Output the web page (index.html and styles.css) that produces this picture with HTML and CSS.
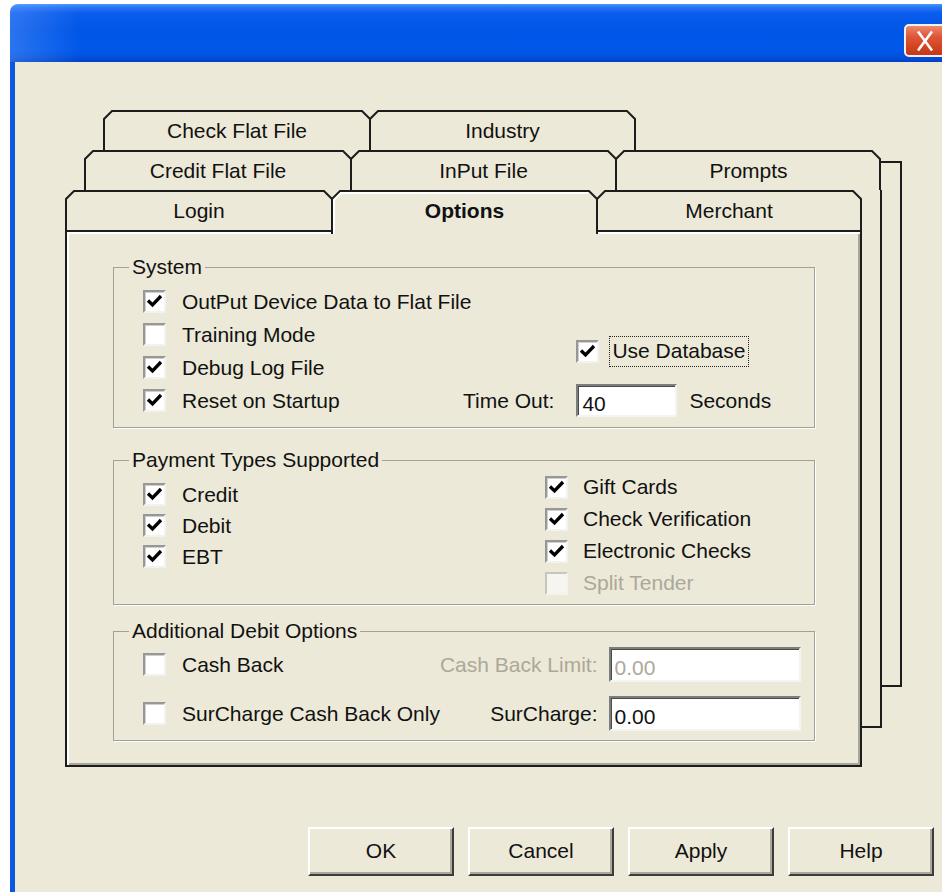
FILE: index.html
```html
<!DOCTYPE html>
<html lang="en">
<head>
<meta charset="utf-8">
<title>Options</title>
<link rel="stylesheet" href="styles.css">
</head>
<body>
<div class="window">
  <div class="titlebar">
    <button class="close" type="button" aria-label="Close">
      <svg width="18" height="22" viewBox="0 0 18 22"><path d="M2 1.5L16 20.5M16 1.5L2 20.5"/></svg>
    </button>
  </div>

  <div class="client">
    <div class="deck">

      <!-- back row -->
      <div class="sheet sheet-3">
        <div class="tab-row">
          <div class="tab t-a">
            <svg class="tab-shape" width="268" height="40" viewBox="0 0 268 40"><path d="M1 40V9L9 1H259L267 9V40"/></svg>
            <span class="tab-label">Check Flat File</span>
          </div>
          <div class="tab t-b">
            <svg class="tab-shape" width="267" height="40" viewBox="0 0 267 40"><path d="M1 40V9L9 1H258L266 9V40"/></svg>
            <span class="tab-label">Industry</span>
          </div>
        </div>
        <div class="page page-back page-3"></div>
      </div>

      <!-- middle row -->
      <div class="sheet sheet-2">
        <div class="tab-row">
          <div class="tab t-a">
            <svg class="tab-shape" width="268" height="40" viewBox="0 0 268 40"><path d="M1 40V9L9 1H259L267 9V40"/></svg>
            <span class="tab-label">Credit Flat File</span>
          </div>
          <div class="tab t-b">
            <svg class="tab-shape" width="267" height="40" viewBox="0 0 267 40"><path d="M1 40V9L9 1H258L266 9V40"/></svg>
            <span class="tab-label">InPut File</span>
          </div>
          <div class="tab t-c">
            <svg class="tab-shape" width="266" height="40" viewBox="0 0 266 40"><path d="M1 40V9L9 1H257L265 9V40"/></svg>
            <span class="tab-label">Prompts</span>
          </div>
        </div>
        <div class="page page-back page-2"></div>
      </div>

      <!-- front row with the active page -->
      <div class="sheet sheet-1">
        <div class="tab-row">
          <div class="tab t-a">
            <svg class="tab-shape" width="268" height="40" viewBox="0 0 268 40"><path d="M1 40V9L9 1H259L267 9V40"/></svg>
            <span class="tab-label">Login</span>
          </div>
          <div class="tab t-b tab-active">
            <svg class="tab-shape" width="267" height="44" viewBox="0 0 267 44"><path d="M1 44V9L9 1H258L266 9V44"/><path class="hl" d="M3 44V10L10 3H257"/></svg>
            <span class="tab-label">Options</span>
          </div>
          <div class="tab t-c">
            <svg class="tab-shape" width="266" height="40" viewBox="0 0 266 40"><path d="M1 40V9L9 1H257L265 9V40"/></svg>
            <span class="tab-label">Merchant</span>
          </div>
        </div>

        <div class="page page-front">

          <fieldset class="group group-system">
            <legend>System</legend>
            <div class="sys-grid">
              <div class="sys-checks">
                <label class="check"><span class="box"><svg viewBox="0 0 19 19"><path d="M3 8.5L7.5 13L16 4"/></svg></span><span>OutPut Device Data to Flat File</span></label>
                <label class="check"><span class="box"></span><span>Training Mode</span></label>
                <label class="check"><span class="box"><svg viewBox="0 0 19 19"><path d="M3 8.5L7.5 13L16 4"/></svg></span><span>Debug Log File</span></label>
                <label class="check"><span class="box"><svg viewBox="0 0 19 19"><path d="M3 8.5L7.5 13L16 4"/></svg></span><span>Reset on Startup</span></label>
              </div>
              <label class="check check-focus use-db"><span class="box"><svg viewBox="0 0 19 19"><path d="M3 8.5L7.5 13L16 4"/></svg></span><span class="focus">Use Database</span></label>
              <span class="field-label timeout-label">Time Out:</span>
              <span class="edit timeout-edit">40</span>
              <span class="seconds">Seconds</span>
            </div>
          </fieldset>

          <fieldset class="group group-payment">
            <legend>Payment Types Supported</legend>
            <div class="pay-grid">
              <div class="pay-left">
                <label class="check"><span class="box"><svg viewBox="0 0 19 19"><path d="M3 8.5L7.5 13L16 4"/></svg></span><span>Credit</span></label>
                <label class="check"><span class="box"><svg viewBox="0 0 19 19"><path d="M3 8.5L7.5 13L16 4"/></svg></span><span>Debit</span></label>
                <label class="check"><span class="box"><svg viewBox="0 0 19 19"><path d="M3 8.5L7.5 13L16 4"/></svg></span><span>EBT</span></label>
              </div>
              <div class="pay-right">
                <label class="check"><span class="box"><svg viewBox="0 0 19 19"><path d="M3 8.5L7.5 13L16 4"/></svg></span><span>Gift Cards</span></label>
                <label class="check"><span class="box"><svg viewBox="0 0 19 19"><path d="M3 8.5L7.5 13L16 4"/></svg></span><span>Check Verification</span></label>
                <label class="check"><span class="box"><svg viewBox="0 0 19 19"><path d="M3 8.5L7.5 13L16 4"/></svg></span><span>Electronic Checks</span></label>
                <label class="check is-disabled"><span class="box"></span><span>Split Tender</span></label>
              </div>
            </div>
          </fieldset>

          <fieldset class="group group-debit">
            <legend>Additional Debit Options</legend>
            <div class="debit-grid">
              <label class="check"><span class="box"></span><span>Cash Back</span></label>
              <span class="field-label is-disabled">Cash Back Limit:</span>
              <span class="edit is-disabled">0.00</span>
              <label class="check"><span class="box"></span><span>SurCharge Cash Back Only</span></label>
              <span class="field-label">SurCharge:</span>
              <span class="edit">0.00</span>
            </div>
          </fieldset>

        </div>
      </div>
    </div>

    <div class="actions">
      <button class="btn" type="button">OK</button>
      <button class="btn" type="button">Cancel</button>
      <button class="btn" type="button">Apply</button>
      <button class="btn" type="button">Help</button>
    </div>
  </div>
</div>
</body>
</html>
```

FILE: styles.css
```css
html, body {
  margin: 0;
  height: 100%;
  overflow: hidden;
  background: #ffffff;
}

body {
  font-family: "Liberation Sans", Arial, sans-serif;
  font-size: 21px;
  color: #111;
}

/* ---------- window frame ---------- */
.window {
  margin: 4px 0 0 10px;
  width: 944px;
  height: 888px;
  display: flex;
  flex-direction: column;
}

.titlebar {
  height: 58px;
  flex: none;
  border-radius: 8px 8px 0 0;
  background:
    linear-gradient(90deg, rgba(120, 170, 255, 0.35) 0, rgba(120, 170, 255, 0) 70px),
    linear-gradient(180deg, #4a97ff 0, #2a78f6 3px, #0a5cec 9px, #0056e6 26px, #0058ea 46px, #0050dc 53px, #0040c6 58px);
  display: flex;
  justify-content: flex-end;
  align-items: flex-start;
  padding: 20px 8px 0 0;
  box-sizing: border-box;
}

.close {
  width: 42px;
  height: 33px;
  padding: 0;
  border: 2px solid #f4f0ee;
  border-radius: 5px;
  background: linear-gradient(180deg, #ec8a6d 0, #e0583a 35%, #d2451f 70%, #c2391a 100%);
  display: flex;
  align-items: center;
  justify-content: center;
}

.close svg {
  display: block;
  fill: none;
  stroke: #ffffff;
  stroke-width: 2.6;
}

.client {
  flex: 1;
  background: #ece9d8;
  border-left: 5px solid #0b57df;
}

/* ---------- stacked tab sheets ---------- */
.deck {
  display: grid;
  margin: 48px 0 0 50px;
  width: 840px;
}

.sheet {
  grid-area: 1 / 1;
  width: 797px;
  align-self: start;
  position: relative;
}

.sheet-3 { margin-left: 38px; z-index: 1; width: 799px; }
.sheet-2 { margin-left: 19px; margin-top: 40px; z-index: 2; width: 798px; }
.sheet-1 { margin-top: 80px; z-index: 3; }

.tab-row {
  display: flex;
  height: 40px;
}

.tab {
  position: relative;
  height: 40px;
  display: flex;
  align-items: center;
  justify-content: center;
  flex: none;
}

.tab + .tab { margin-left: -2px; }

.t-a { width: 268px; }
.t-b { width: 267px; }
.t-c { width: 266px; }

.sheet-2 .t-c { width: 267px; }

.tab-shape {
  position: absolute;
  top: 0;
  left: 0;
  fill: #ece9d8;
  stroke: #1c1c1c;
  stroke-width: 2;
}

.tab-shape .hl {
  fill: none;
  stroke: #ffffff;
}

.tab-label {
  position: relative;
  padding-top: 1px;
}

.tab-active {
  height: 44px;
  align-items: flex-start;
  z-index: 1;
}

.tab-active .tab-label {
  font-weight: bold;
  padding-top: 9px;
}

.page {
  box-sizing: border-box;
  background: #ece9d8;
}

.page-2 {
  height: 538px;
  border: 2px solid #1c1c1c;
  border-top: 0;
}

.page-3 {
  margin-top: 11px;
  height: 526px;
  border: 2px solid #1c1c1c;
}

.page-front {
  height: 537px;
  border: 2px solid #1c1c1c;
  box-shadow: inset 2px 2px 0 #ffffff, inset -2px -2px 0 #a9a69a;
  padding: 23px 45px 0 46px;
}

/* ---------- group boxes ---------- */
.group {
  margin: 0;
  padding: 0;
  border: 1px solid #a3a195;
  box-shadow: 1px 1px 0 #ffffff;
  min-width: 0;
}

.group legend {
  padding: 0 3px;
  margin-left: 15px;
  line-height: 24px;
}

.group-payment { margin-top: 20px; }
.group-debit { margin-top: 14px; }

/* ---------- checkboxes ---------- */
.check {
  display: flex;
  align-items: center;
  gap: 16px;
  height: 33px;
  white-space: nowrap;
}

.box {
  width: 23px;
  height: 23px;
  box-sizing: border-box;
  flex: none;
  border: 2px solid;
  border-color: #979797 #f2f2f0 #f2f2f0 #979797;
  box-shadow: inset 1px 1px 0 #cfcfcf;
  background: #ffffff;
}

.box svg {
  display: block;
  width: 19px;
  height: 19px;
  fill: none;
  stroke: #000;
  stroke-width: 3.3;
}

.is-disabled { color: #aca899; }

.check.is-disabled .box {
  border-color: #c8c6bc #f4f3ee #f4f3ee #c8c6bc;
  box-shadow: none;
  background: #f6f5f0;
}

/* ---------- System ---------- */
.sys-grid {
  display: grid;
  grid-template-columns: 320px auto 101px auto;
  grid-template-rows: repeat(4, 33px);
  justify-content: start;
  padding: 6px 0 10px 29px;
  align-items: center;
}

.sys-checks {
  grid-column: 1;
  grid-row: 1 / 5;
  align-self: start;
}

.use-db {
  grid-column: 3 / 5;
  grid-row: 2 / 4;
  gap: 10px;
}

.focus {
  border: 1px dotted #222;
  padding: 2px 3px 3px 2px;
  line-height: 24px;
}

.field-label {
  text-align: right;
  white-space: nowrap;
}

.timeout-label {
  grid-column: 2;
  grid-row: 4;
  padding-right: 22px;
}

.timeout-edit {
  grid-column: 3;
  grid-row: 4;
}

.seconds {
  grid-column: 4;
  grid-row: 4;
  padding-left: 12px;
}

/* ---------- sunken edit boxes ---------- */
.edit {
  display: block;
  height: 33px;
  box-sizing: border-box;
  border: 2px solid;
  border-color: #7d7d7d #f4f4f0 #f4f4f0 #7d7d7d;
  box-shadow: inset 1px 1px 0 #4a4a4a;
  background: #ffffff;
  padding: 6px 0 0 4px;
  line-height: 24px;
}

/* ---------- Payment Types ---------- */
.pay-grid {
  display: grid;
  grid-template-columns: 402px auto;
  padding: 0 0 5px 29px;
  align-items: start;
}

.pay-left { padding-top: 7px; }
.pay-left .check { height: 31px; }

.pay-right { margin-top: -1px; }
.pay-right .check { height: 32px; gap: 15px; }

/* ---------- Additional Debit ---------- */
.debit-grid {
  display: grid;
  grid-template-columns: 1fr auto 192px;
  grid-auto-rows: 35px;
  row-gap: 14px;
  align-items: center;
  padding: 4px 14px 9px 29px;
}

.debit-grid .field-label { padding-right: 11px; }
.debit-grid .edit { height: 35px; padding-top: 7px; }

/* ---------- dialog buttons ---------- */
.actions {
  display: flex;
  justify-content: flex-end;
  gap: 14px;
  margin-top: 60px;
  padding-right: 20px;
}

.btn {
  width: 146px;
  height: 49px;
  box-sizing: border-box;
  font: inherit;
  color: #111;
  background: #ece9d8;
  border: 2px solid;
  border-color: #ffffff #3c3c3c #3c3c3c #ffffff;
  box-shadow: inset -2px -2px 0 #aca899;
  padding: 0 0 2px;
}
```
